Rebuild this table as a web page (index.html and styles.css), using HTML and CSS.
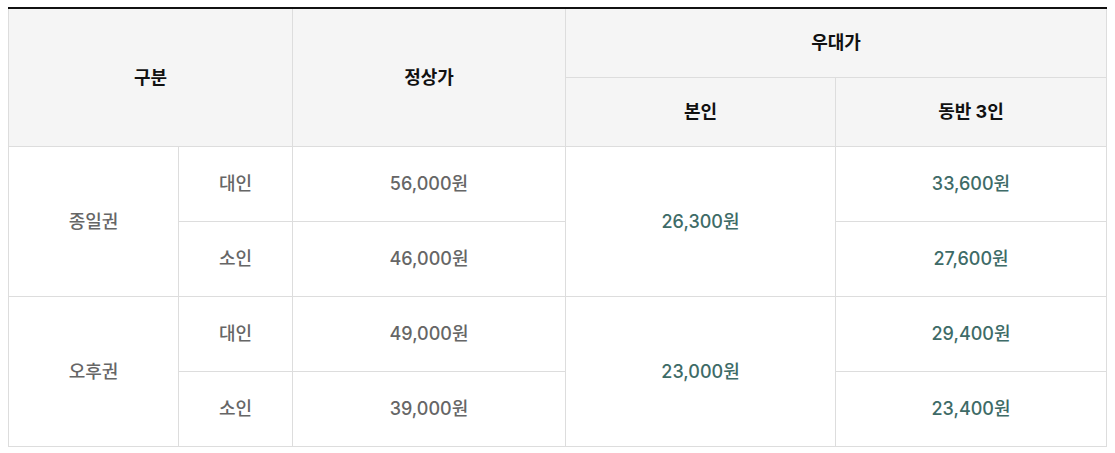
FILE: index.html
```html
<!DOCTYPE html>
<html lang="ko">
<head>
<meta charset="utf-8">
<link rel="stylesheet" href="styles.css">
</head>
<body>
<table class="price">
  <colgroup>
    <col class="c1"><col class="c2"><col class="c3"><col class="c4"><col class="c5">
  </colgroup>
  <thead>
    <tr class="h1">
      <th colspan="2" rowspan="2">구분</th>
      <th rowspan="2">정상가</th>
      <th colspan="2">우대가</th>
    </tr>
    <tr class="h2">
      <th>본인</th>
      <th>동반 3인</th>
    </tr>
  </thead>
  <tbody>
    <tr>
      <td rowspan="2">종일권</td>
      <td>대인</td>
      <td>56,000원</td>
      <td rowspan="2" class="deal">26,300원</td>
      <td class="deal">33,600원</td>
    </tr>
    <tr>
      <td>소인</td>
      <td>46,000원</td>
      <td class="deal">27,600원</td>
    </tr>
    <tr>
      <td rowspan="2">오후권</td>
      <td>대인</td>
      <td>49,000원</td>
      <td rowspan="2" class="deal">23,000원</td>
      <td class="deal">29,400원</td>
    </tr>
    <tr>
      <td>소인</td>
      <td>39,000원</td>
      <td class="deal">23,400원</td>
    </tr>
  </tbody>
</table>
</body>
</html>
```
FILE: styles.css
```css
html, body {
  margin: 0;
  background: #ffffff;
}
body {
  padding: 7px 8px 0 8px;
  font-family: Inter, "Noto Sans CJK KR", sans-serif;
}
.price {
  width: 100%;
  border-collapse: collapse;
  table-layout: fixed;
  border-top: 2px solid #111111;
}
.c1 { width: 170px; }
.c2 { width: 114px; }
.c3 { width: 273px; }
.c4 { width: 270px; }
.c5 { width: auto; }
.price th,
.price td {
  border: 1px solid #dddddd;
  text-align: center;
  vertical-align: middle;
  padding: 0;
  line-height: 1.2;
}
.price th {
  background: #f5f5f5;
  color: #111111;
  font-size: 18px;
  font-weight: 700;
  height: 68px;
}
.price td {
  height: 74px;
  color: #666666;
  font-size: 18px;
  font-weight: 500;
}
.price td.deal {
  color: #3e6b67;
}
```
